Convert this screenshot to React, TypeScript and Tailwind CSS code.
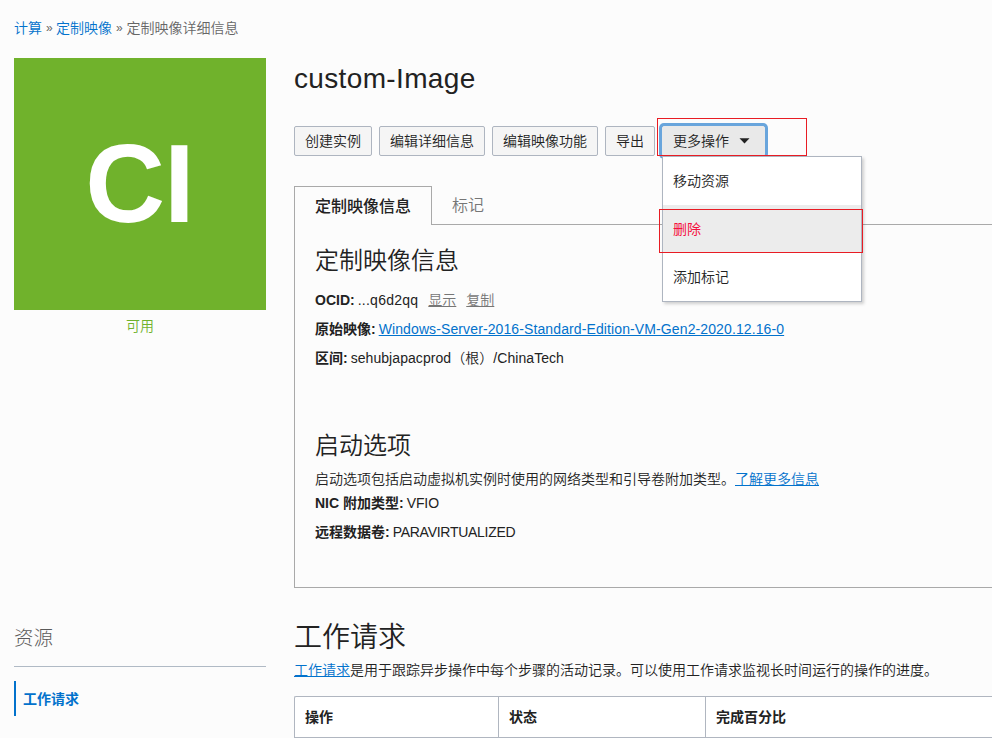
import React from 'react';

function ActionButton({
  children,
  className = 'border-[#aeb5c0] bg-[#f5f5f5]',
}: {
  children: React.ReactNode;
  className?: string;
}) {
  return (
    <button
      className={`flex h-[30px] shrink-0 items-center rounded-[2px] border px-[10px] whitespace-nowrap ${className}`}
    >
      {children}
    </button>
  );
}

function Field({ label, children }: { label: string; children: React.ReactNode }) {
  return (
    <div className="flex h-[29px] items-center whitespace-nowrap">
      <span className="mr-[3px] font-bold">{label}</span>
      {children}
    </div>
  );
}

function ActionsMenu() {
  return (
    <div className="absolute top-[30px] left-0 z-10 h-[146px] w-[200px] border border-[#aeb5c0] bg-white shadow-[2px_2px_3px_rgba(0,0,0,0.18)]">
      <div className="flex h-12 items-center px-[10px]">移动资源</div>
      <div className="relative flex h-12 items-center bg-[#ececec] px-[10px] font-normal text-[#f5103f]">
        删除
        <div className="absolute top-1 -left-1 h-11 w-[204px] border border-[#e81c24]" />
      </div>
      <div className="flex h-12 items-center px-[10px]">添加标记</div>
    </div>
  );
}

function Sidebar() {
  return (
    <aside className="w-[252px] shrink-0">
      <div className="flex h-[252px] items-center justify-center bg-[#70b22c]">
        <span className="pr-[1px] text-[110.5px] leading-none font-bold tracking-[-1px] text-white">CI</span>
      </div>
      <div className="mt-1.5 h-5 text-center text-[#70b22c]">可用</div>
      <div className="mt-[288px] flex h-[43px] items-start border-b border-[#b0bac5] text-[19.5px] leading-[29px] font-light text-[#5a5a5a]">
        资源
      </div>
      <div className="mt-[14px] flex h-[35px] items-center border-l-2 border-[#0272cc] pl-[7px] font-bold text-[#0272cc]">
        工作请求
      </div>
    </aside>
  );
}

function DetailsPanel() {
  return (
    <section className="mt-[30px]">
      <div className="flex h-[39px]">
        <div className="flex w-[138px] items-center border-x border-t border-[#a9a9a9] pt-[2px] pl-5 text-[16px] font-medium">
          定制映像信息
        </div>
        <div className="flex flex-1 items-center border-b border-[#a9a9a9] pt-px pl-5 text-[16px] text-[#767676]">
          标记
        </div>
      </div>
      <div className="h-[363px] border-b border-l border-[#a9a9a9] pl-5">
        <h2 className="pt-[20px] text-[24px] leading-8">定制映像信息</h2>
        <div className="mt-[8px]">
          <Field label="OCID:">
            <span className="tracking-[0.25px]">...q6d2qq</span>
            <a className="ml-[10px] text-[#767676] underline">显示</a>
            <a className="ml-[10px] text-[#767676] underline">复制</a>
          </Field>
          <Field label="原始映像:">
            <a className="tracking-[0.11px] text-[#0272cc] underline">
              Windows-Server-2016-Standard-Edition-VM-Gen2-2020.12.16-0
            </a>
          </Field>
          <Field label="区间:">
            <span className="tracking-[0.06px]">sehubjapacprod（根）/ChinaTech</span>
          </Field>
        </div>
        <h2 className="mt-[58px] text-[24px] leading-8">启动选项</h2>
        <p className="mt-[7px] whitespace-nowrap">
          启动选项包括启动虚拟机实例时使用的网络类型和引导卷附加类型。
          <a className="text-[#0272cc] underline">了解更多信息</a>
        </p>
        <div className="-mt-px">
          <Field label="NIC 附加类型:">
            <span className="tracking-[-0.1px]">VFIO</span>
          </Field>
          <Field label="远程数据卷:">
            <span className="tracking-[-0.27px]">PARAVIRTUALIZED</span>
          </Field>
        </div>
      </div>
    </section>
  );
}

function WorkRequests() {
  return (
    <section className="mt-[30px]">
      <h2 className="text-[28px] leading-10">工作请求</h2>
      <p className="mt-[2px] whitespace-nowrap">
        <a className="text-[#0272cc] underline">工作请求</a>
        是用于跟踪异步操作中每个步骤的活动记录。可以使用工作请求监视长时间运行的操作的进度。
      </p>
      <div className="mt-[16px] flex h-[42px] rounded-tl-[2px] border-y border-l border-[#b0b6c0] bg-white font-bold">
        <div className="flex w-[204px] items-center border-r border-[#b0b6c0] pl-[10px]">操作</div>
        <div className="flex w-[207px] items-center border-r border-[#b0b6c0] pl-[10px]">状态</div>
        <div className="flex flex-1 items-center pl-[10px]">完成百分比</div>
      </div>
    </section>
  );
}

export default function App() {
  return (
    <div className="h-[738px] w-[992px] overflow-hidden bg-[#fcfcfc] pl-[14px] font-['Liberation_Sans','Noto_Sans_CJK_SC',sans-serif] text-[14px] leading-5 font-[350] text-[#222]">
      <nav className="flex h-[58px] items-start gap-1 pt-[18px] text-[#666]">
        <a className="text-[#0272cc]">计算</a>
        <span className="w-[6px] text-[12px]">»</span>
        <a className="text-[#0272cc]">定制映像</a>
        <span className="w-[6px] text-[12px]">»</span>
        <span className="pl-[0.5px]">定制映像详细信息</span>
      </nav>
      <div className="flex gap-7">
        <Sidebar />
        <main className="min-w-0 flex-1">
          <h1 className="h-[68px] text-[28px] leading-[42px] tracking-[0.35px]">custom-Image</h1>
          <div className="flex gap-[7px]">
            <ActionButton>创建实例</ActionButton>
            <ActionButton>编辑详细信息</ActionButton>
            <ActionButton>编辑映像功能</ActionButton>
            <ActionButton>导出</ActionButton>
            <div className="relative">
              <ActionButton className="w-[103px] border-[#e9e9e9] bg-[#e9e9e9] shadow-[0_0_0_3px_#69a5dc]">
                更多操作
                <svg className="ml-[10px]" width="11" height="6" viewBox="0 0 11 6">
                  <path d="M0.5 0.3h10L5.5 5.6z" fill="#222" />
                </svg>
              </ActionButton>
              <ActionsMenu />
              <div className="absolute -top-2 -left-[5px] z-20 h-[38px] w-[150px] border border-[#e81c24]" />
            </div>
          </div>
          <DetailsPanel />
          <WorkRequests />
        </main>
      </div>
    </div>
  );
}
